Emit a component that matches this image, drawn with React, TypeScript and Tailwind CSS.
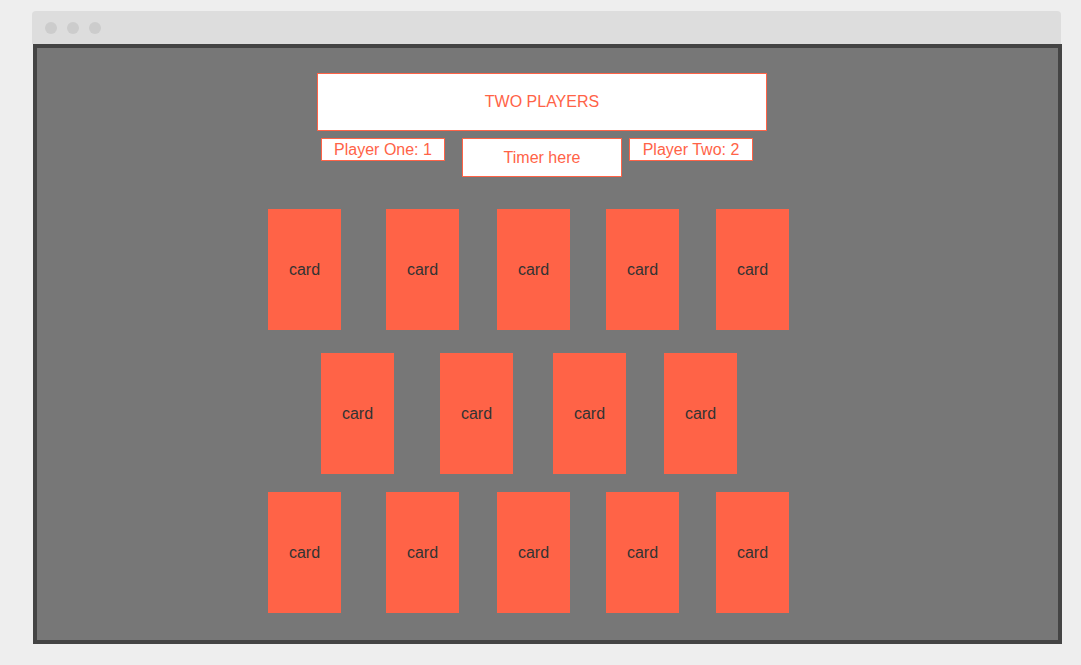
const rowA = ['ml-0', 'ml-[45px]', 'ml-[38px]', 'ml-[36px]', 'ml-[37px]'];
const rowB = ['ml-0', 'ml-[46px]', 'ml-[40px]', 'ml-[38px]'];

const Card = ({ className }: { className: string }) => (
  <div className={`${className} flex h-[121px] w-[73px] shrink-0 items-center justify-center bg-[#ff6347] text-[16px] text-[#333333]`}>
    card
  </div>
);

const App = () => {
  return (
    <div className="h-[665px] w-[1081px] overflow-hidden bg-[#eeeeee] pt-[11px] pl-[32px] font-['Liberation_Sans',Arial,sans-serif]">
      {/* WINDOW CHROME */}
      <div className="flex h-[33px] w-[1029px] items-center gap-[10px] rounded-t-[4px] bg-[#dddddd] pl-[13px]">
        <div className="h-[12px] w-[12px] rounded-full bg-[#cccccc]"></div>
        <div className="h-[12px] w-[12px] rounded-full bg-[#cccccc]"></div>
        <div className="h-[12px] w-[12px] rounded-full bg-[#cccccc]"></div>
      </div>

      {/* GAME AREA */}
      <div className="ml-[1px] h-[600px] w-[1029px] border-4 border-[#444444] bg-[#777777] pt-[25px]">
        <div className="ml-[280px] flex h-[58px] w-[450px] items-center justify-center border border-[#ff6347] bg-white text-[16px] text-[#ff6347]">
          TWO PLAYERS
        </div>

        <div className="mt-[7px] flex items-start text-[16px] text-[#ff6347]">
          <div className="ml-[284px] flex h-[23px] w-[124px] items-center justify-center border border-[#ff6347] bg-white">
            Player One: 1
          </div>
          <div className="ml-[17px] flex h-[39px] w-[160px] items-center justify-center border border-[#ff6347] bg-white">
            Timer here
          </div>
          <div className="ml-[7px] flex h-[23px] w-[124px] items-center justify-center border border-[#ff6347] bg-white">
            Player Two: 2
          </div>
        </div>

        <div className="mt-[32px] ml-[231px] flex">
          {rowA.map((m, i) => <Card key={i} className={m} />)}
        </div>
        <div className="mt-[23px] ml-[284px] flex">
          {rowB.map((m, i) => <Card key={i} className={m} />)}
        </div>
        <div className="mt-[18px] ml-[231px] flex">
          {rowA.map((m, i) => <Card key={i} className={m} />)}
        </div>
      </div>
    </div>
  );
};

export default App;
